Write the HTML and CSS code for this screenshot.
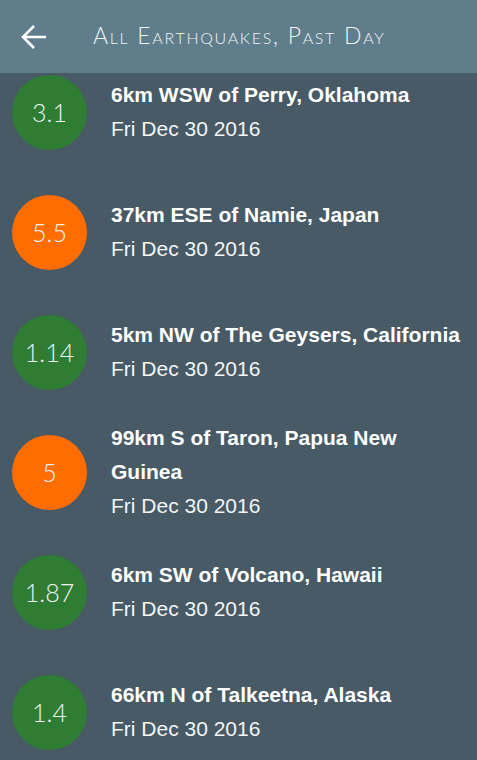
FILE: index.html
```html
<!DOCTYPE html>
<html lang="en">
<head>
    <meta charset="UTF-8">
    <title>All Earthquakes, Past Day</title>
    <link rel="stylesheet" href="styles.css">
</head>
<body>
    <header class="toolbar">
        <button class="back" aria-label="Back">
            <svg width="26" height="26" viewBox="0 0 26 26">
                <path d="M25 13H3M13 2L2 13l11 11" fill="none" stroke="#fff" stroke-width="2.6"/>
            </svg>
        </button>
        <h1 class="title">All Earthquakes, Past Day</h1>
    </header>

    <main class="viewport">
        <ul class="quakes">
            <li class="quake">
                <div class="mag minor">3.1</div>
                <div class="info">
                    <div class="place">6km WSW of Perry, Oklahoma</div>
                    <div class="date">Fri Dec 30 2016</div>
                </div>
            </li>
            <li class="quake">
                <div class="mag major">5.5</div>
                <div class="info">
                    <div class="place">37km ESE of Namie, Japan</div>
                    <div class="date">Fri Dec 30 2016</div>
                </div>
            </li>
            <li class="quake">
                <div class="mag minor">1.14</div>
                <div class="info">
                    <div class="place">5km NW of The Geysers, California</div>
                    <div class="date">Fri Dec 30 2016</div>
                </div>
            </li>
            <li class="quake">
                <div class="mag major">5</div>
                <div class="info">
                    <div class="place">99km S of Taron, Papua New Guinea</div>
                    <div class="date">Fri Dec 30 2016</div>
                </div>
            </li>
            <li class="quake">
                <div class="mag minor">1.87</div>
                <div class="info">
                    <div class="place">6km SW of Volcano, Hawaii</div>
                    <div class="date">Fri Dec 30 2016</div>
                </div>
            </li>
            <li class="quake">
                <div class="mag minor">1.4</div>
                <div class="info">
                    <div class="place">66km N of Talkeetna, Alaska</div>
                    <div class="date">Fri Dec 30 2016</div>
                </div>
            </li>
        </ul>
    </main>
</body>
</html>
```
FILE: styles.css
```css
html, body {
    height: 100%;
}

body {
    margin: 0;
    background-color: #475a65;
    font-family: "Liberation Sans", Arial, sans-serif;
    color: #fff;
    display: flex;
    flex-direction: column;
    overflow: hidden;
}

.toolbar {
    height: 73px;
    flex: none;
    display: flex;
    align-items: center;
    background-color: #607d8b;
    position: relative;
    z-index: 1;
}

.back {
    width: 26px;
    height: 26px;
    margin-left: 21px;
    padding: 0;
    border: none;
    background: none;
    display: flex;
}

.title {
    margin: 0 0 4px 46px;
    font-family: Lato, "Open Sans", sans-serif;
    font-weight: 300;
    font-size: 23px;
    font-variant: small-caps;
    letter-spacing: 1.7px;
    color: #f0f3f4;
}

.viewport {
    flex: 1;
    overflow: hidden;
}

.quakes {
    list-style: none;
    margin: -21px 0 0 0;
    padding: 0;
}

.quake {
    height: 120px;
    display: flex;
    align-items: center;
}

.mag {
    width: 75px;
    height: 75px;
    flex: none;
    margin-left: 12px;
    border-radius: 50%;
    display: flex;
    align-items: center;
    justify-content: center;
    font-family: Lato, "Open Sans", sans-serif;
    font-weight: 300;
    font-size: 25px;
    color: #f2f2f2;
}

.minor {
    background-color: #2e7d32;
}

.major {
    background-color: #ff6d00;
}

.info {
    margin-left: 24px;
    padding-right: 12px;
}

.place {
    font-weight: bold;
    font-size: 21px;
    line-height: 34px;
}

.date {
    font-size: 21px;
    line-height: 34px;
    color: #f4f4f4;
}
```
